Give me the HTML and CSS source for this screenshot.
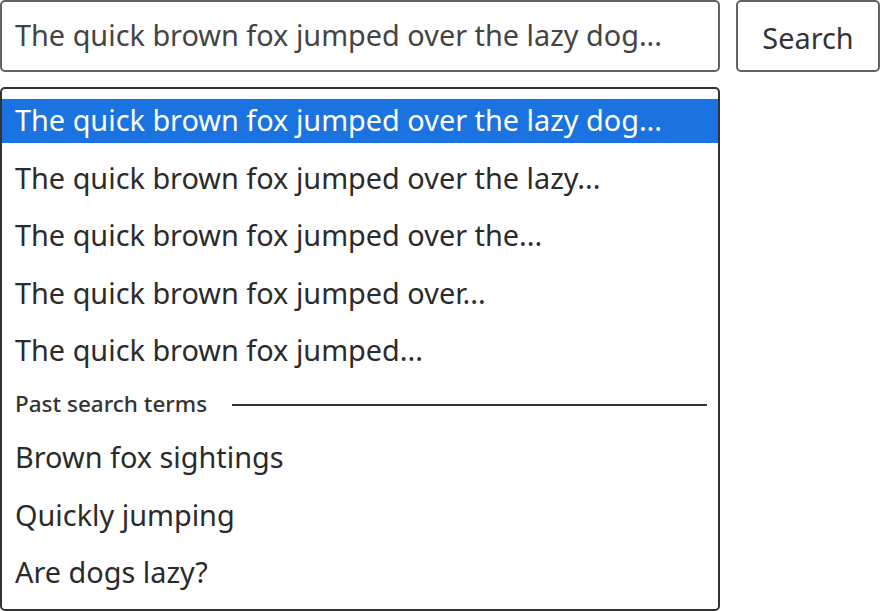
FILE: index.html
```html
<!DOCTYPE html>
<html>
<head>
<meta charset="utf-8">
<link rel="stylesheet" href="styles.css">
</head>
<body>
<div class="page">
  <div class="search-row">
    <div class="input">The quick brown fox jumped over the lazy dog...</div>
    <button class="btn">Search</button>
  </div>
  <ul class="listbox">
    <li class="opt active">The quick brown fox jumped over the lazy dog...</li>
    <li class="opt">The quick brown fox jumped over the lazy...</li>
    <li class="opt">The quick brown fox jumped over the...</li>
    <li class="opt">The quick brown fox jumped over...</li>
    <li class="opt">The quick brown fox jumped...</li>
    <li class="group"><span class="group-label">Past search terms</span><span class="group-line"></span></li>
    <li class="opt">Brown fox sightings</li>
    <li class="opt">Quickly jumping</li>
    <li class="opt">Are dogs lazy?</li>
  </ul>
</div>
</body>
</html>
```

FILE: styles.css
```css
* { box-sizing: border-box; }
html, body { margin: 0; padding: 0; background: #fff; }
body { font-family: "Noto Sans", "Open Sans", sans-serif; color: #333; }
.page { width: 880px; }
.search-row { display: flex; gap: 16px; height: 72px; }
.input {
  width: 720px; height: 72px;
  border: 2px solid #5f6368; border-radius: 5px;
  padding: 0 13px 3px 13px;
  display: flex; align-items: center;
  font-size: 28.85px; color: #444;
  white-space: nowrap;
}
.btn {
  width: 144px; height: 72px;
  border: 2px solid #5f6368; border-radius: 5px;
  background: #fff;
  font-family: inherit; font-size: 28.85px; color: #333;
  padding: 2px 0 0 0;
}
.listbox {
  list-style: none; margin: 15px 0 0 0; padding: 10px 0 0 0;
  width: 720px; height: 524px;
  border: 2px solid #333; border-radius: 5px;
  display: flex; flex-direction: column; gap: 13.5px;
}
.opt {
  height: 44px; display: flex; align-items: center;
  padding: 0 13px 3px 13px; font-size: 28.85px; color: #2b2b2b;
  font-weight: 420;
  white-space: nowrap;
}
.opt.active { background: #1a73e0; color: #fff; font-weight: 400; }
.group {
  height: 36px; display: flex; align-items: center; gap: 25px;
  padding: 0 11px 3px 13px;
}
.group-label { font-size: 22.5px; font-weight: 500; color: #333; white-space: nowrap; }
.group-line { flex: 1; height: 2px; background: #333; margin-top: 3px; }
```
